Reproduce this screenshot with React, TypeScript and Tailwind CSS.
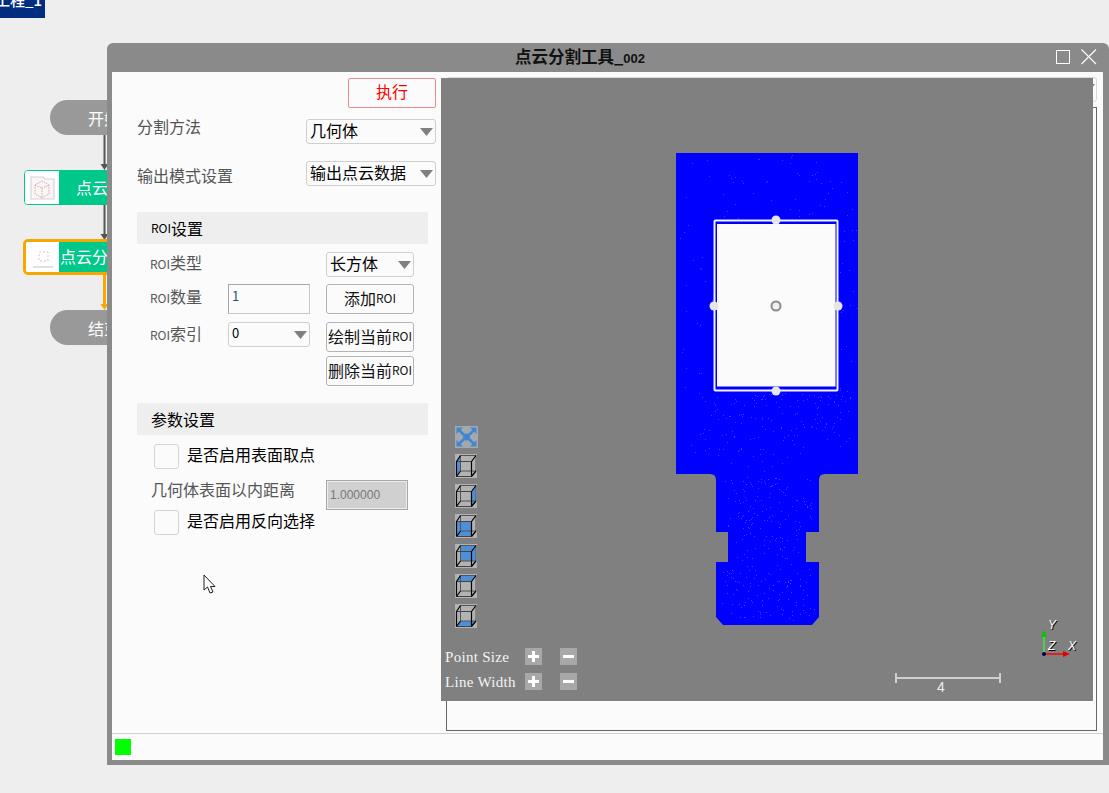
import React from "react";

const cjk = "font-['Noto_Sans_CJK_SC','Liberation_Sans',sans-serif]";

function Roi() {
  return <span className="text-[12px]">ROI</span>;
}

function Arrow() {
  return (
    <svg width="13" height="8" viewBox="0 0 13 8" className="shrink-0">
      <path d="M0 0H13L6.5 8Z" fill="#808080" />
    </svg>
  );
}

function Select({ value, className, small }: { value: string; className: string; small?: boolean }) {
  return (
    <div
      className={`flex items-center justify-between rounded-[3px] border border-[#cfcfcf] bg-[#fbfbfb] pl-[3px] pr-[2px] text-black ${
        small ? "text-[13px]" : "text-[16px]"
      } leading-none ${className}`}
    >
      <span className="mb-[4px]">{value}</span>
      <Arrow />
    </div>
  );
}

function Btn({ children, className = "" }: { children: React.ReactNode; className?: string }) {
  return (
    <div
      className={`flex h-[30px] w-[88px] items-center justify-center overflow-hidden whitespace-nowrap rounded-[3px] border border-[#b4b4b4] bg-[#fbfbfb] pb-[3px] text-[16px] leading-none text-[#111] ${className}`}
    >
      {children}
    </div>
  );
}

function SectionBar({ children, className = "" }: { children: React.ReactNode; className?: string }) {
  return (
    <div
      className={`ml-[25px] flex h-[32px] w-[291px] items-center rounded-[2px] bg-[#eeeeee] pl-[14px] text-[16px] leading-none text-black ${className}`}
    >
      {children}
    </div>
  );
}

function CheckRow({ label, className = "" }: { label: string; className?: string }) {
  return (
    <div className={`ml-[42px] flex items-center gap-[8px] text-[16px] leading-none text-black ${className}`}>
      <div className="h-[25px] w-[25px] rounded-[3px] border border-[#d4d4d4] bg-[#fbfbfb]" />
      <span className="mb-[5px]">{label}</span>
    </div>
  );
}

// draws the small orthographic view buttons, only the highlighted face differs
function Cube({ face }: { face: "left" | "right" | "front" | "back" | "top" | "bottom" }) {
  const faces = {
    left: "M1.5 7.5L5.5 1.5V17L1.5 22.5Z",
    right: "M16.5 7.5L21 1.5V17L16.5 22.5Z",
    front: "M1.5 7.5H16.5V22.5H1.5Z",
    back: "M5.5 1.5H21V17H5.5Z",
    top: "M1.5 7.5L5.5 1.5H21L16.5 7.5Z",
    bottom: "M1.5 22.5L5.5 17H21L16.5 22.5Z",
  };
  return (
    <svg width="22" height="24" viewBox="0 0 22 24" className="block bg-[#b2b2b2]">
      <path d={faces[face]} fill="#4f8fd6" />
      <path d="M5.5 1.5H21V17H5.5Z" fill="none" stroke="#555" strokeWidth="1" />
      <path d="M1.5 7.5H16.5V22.5H1.5Z" fill="none" stroke="#444" strokeWidth="1" />
      <path
        d="M1.5 7.5L5.5 1.5M16.5 7.5L21 1.5M1.5 22.5L5.5 17M16.5 22.5L21 17M1.5 7.5V22.5M16.5 7.5V22.5"
        fill="none"
        stroke="#000"
        strokeWidth="1.2"
      />
    </svg>
  );
}

function FitIcon() {
  return (
    <svg width="23" height="22" viewBox="0 0 23 22" className="block bg-[#a4a8ac]">
      <circle cx="11.5" cy="11" r="3.5" fill="#3f87d2" />
      <path d="M3 3L9 9M20 3L14 9M3 19L9 13M20 19L14 13" stroke="#3f87d2" strokeWidth="2.5" />
      <path d="M1.5 1.5H8L1.5 8ZM21.5 1.5H15L21.5 8ZM1.5 20.5H8L1.5 14ZM21.5 20.5H15L21.5 14Z" fill="#3f87d2" />
    </svg>
  );
}

function SizeBtn({ minus }: { minus?: boolean }) {
  return (
    <svg width="17" height="17" viewBox="0 0 17 17" className="block bg-[#a8a8a8]">
      <path d={minus ? "M3 8.5H14" : "M3 8.5H14M8.5 3V14"} stroke="#fff" strokeWidth="3" />
    </svg>
  );
}

function SizeRow({ label }: { label: string }) {
  return (
    <div className="flex h-[17px] items-center font-['Liberation_Serif',serif] text-[15px] leading-none tracking-[0.3px] text-[#f4f4f4]">
      <span className="mt-[2px] w-[80px] whitespace-nowrap">{label}</span>
      <SizeBtn />
      <span className="w-[18px]" />
      <SizeBtn minus />
    </div>
  );
}

function makeSpeckles() {
  let seed = 4711;
  const rnd = () => {
    seed = (seed * 16807) % 2147483647;
    return seed / 2147483647;
  };
  const pts: [number, number][] = [];
  const add = (n: number, x0: number, x1: number, y0: number, y1: number) => {
    for (let i = 0; i < n; i++) {
      pts.push([Math.round(x0 + rnd() * (x1 - x0)), Math.round(y0 + rnd() * (y1 - y0))]);
    }
  };
  add(50, 680, 855, 155, 218);
  add(20, 678, 712, 220, 400);
  add(20, 840, 857, 220, 400);
  add(130, 700, 850, 393, 440);
  add(30, 680, 855, 440, 472);
  add(110, 725, 812, 476, 530);
  add(40, 735, 800, 532, 560);
  add(110, 722, 815, 564, 620);
  return pts;
}
const speckles = makeSpeckles();

function PointCloud() {
  return (
    <svg viewBox="441 78 652 623" width="652" height="623" className="absolute inset-0 block">
      <path
        d="M676 153H858V474H825Q819 474 819 480V532H806V562H819V617L812 625H723L716 617V562H728V532H716V480Q716 474 710 474H676Z"
        fill="#0000ff"
      />
      {speckles.map(([x, y], i) => (
        <rect key={i} x={x} y={y} width="1" height="1" fill="#3a3aff" />
      ))}
      <rect x="714.5" y="220.5" width="123" height="170" rx="1" fill="none" stroke="#f4f4ff" strokeWidth="2" />
      <rect x="717" y="224" width="118.5" height="162.5" fill="#fbfbfb" />
      {[
        [776, 220],
        [776, 391],
        [714, 306],
        [838, 306],
      ].map(([cx, cy]) => (
        <circle key={`${cx}-${cy}`} cx={cx} cy={cy} r="4.5" fill="#e6e6e6" />
      ))}
      <circle cx="776" cy="306" r="4.5" fill="#f0f0f0" stroke="#8a8a8a" strokeWidth="2" />

      <path d="M1044 654V636" stroke="#4fcf4f" strokeWidth="2" />
      <path d="M1044 630L1041 637H1047Z" fill="#00c800" />
      <path d="M1044 654H1064" stroke="#ff0000" strokeWidth="1.5" />
      <path d="M1070 654L1063 651V657Z" fill="#e00000" />
      <circle cx="1044" cy="654" r="2" fill="#00004a" />
      <g fontFamily="'Liberation Sans', sans-serif" fontSize="12" fontStyle="italic">
        <text x="1048" y="629" fill="#000" dx="1" dy="1">Y</text>
        <text x="1048" y="629" fill="#fff">Y</text>
        <text x="1048" y="650" fill="#000" dx="1" dy="1">Z</text>
        <text x="1048" y="650" fill="#fff">Z</text>
        <text x="1068" y="650" fill="#000" dx="1" dy="1">X</text>
        <text x="1068" y="650" fill="#fff">X</text>
      </g>

      <path d="M896 678H1000" stroke="#cfcfcf" strokeWidth="2" />
      <path d="M896 673V683M1000 673V683" stroke="#cfcfcf" strokeWidth="2" />
      <text x="937" y="692" fontFamily="'Liberation Sans', sans-serif" fontSize="14" fill="#eeeeee">4</text>
    </svg>
  );
}

function Viewport() {
  return (
    <div className="absolute left-0 top-[6px] h-[623px] w-[652px] overflow-hidden bg-[#808080]">
      <PointCloud />
      <div className="absolute left-[14px] top-[348px] flex flex-col gap-[6px]">
        <FitIcon />
        <Cube face="left" />
        <Cube face="right" />
        <Cube face="front" />
        <Cube face="back" />
        <Cube face="top" />
        <Cube face="bottom" />
      </div>
      <div className="absolute left-[4px] top-[570px] flex flex-col gap-[8px]">
        <SizeRow label="Point Size" />
        <SizeRow label="Line Width" />
      </div>
    </div>
  );
}

function LeftPanel() {
  return (
    <div className="w-[329px] shrink-0 text-[#555]">
      <div className="flex justify-end pr-[5px] pt-[6px]">
        <div className="flex h-[30px] w-[88px] items-center justify-center rounded-[2px] border border-[#f08a8a] pb-[4px] text-[16px] leading-none text-[#ff0000]">
          执行
        </div>
      </div>
      <div className="mt-[11px] flex items-start justify-between pl-[25px] pr-[5px]">
        <span className="-mt-[2px] text-[16px] leading-[18px]">分割方法</span>
        <Select value="几何体" className="h-[25px] w-[130px]" />
      </div>
      <div className="mt-[17px] flex items-start justify-between pl-[25px] pr-[5px]">
        <span className="mt-[5px] text-[16px] leading-[18px]">输出模式设置</span>
        <Select value="输出点云数据" className="h-[25px] w-[130px]" />
      </div>
      <SectionBar className="mt-[26px]">
        <Roi />
        设置
      </SectionBar>

      <div className="ml-[38px] mt-[8px] flex w-[264px] items-start justify-between">
        <span className="mt-[1px] text-[16px] leading-[18px]">
          <Roi />
          类型
        </span>
        <Select value="长方体" className="h-[25px] w-[88px]" />
      </div>
      <div className="ml-[38px] mt-[7px] flex w-[264px] items-start">
        <span className="mt-[3px] w-[78px] text-[16px] leading-[18px]">
          <Roi />
          数量
        </span>
        <div className="h-[30px] w-[82px] border border-[#a8a8a8] border-r-[#c8c8c8] border-b-[#c8c8c8] pl-[3px] pt-[2px] text-[13px] leading-[18px] text-[#23527c]">
          1
        </div>
        <Btn className="ml-auto">
          添加
          <Roi />
        </Btn>
      </div>
      <div className="ml-[38px] mt-[8px] flex w-[264px] items-start">
        <span className="mt-[2px] w-[78px] text-[16px] leading-[18px]">
          <Roi />
          索引
        </span>
        <Select value="0" small className="h-[25px] w-[82px]" />
        <Btn className="ml-auto">
          绘制当前
          <Roi />
        </Btn>
      </div>
      <div className="ml-[38px] mt-[4px] flex w-[264px] justify-end">
        <Btn>
          删除当前
          <Roi />
        </Btn>
      </div>

      <SectionBar className="mt-[17px]">参数设置</SectionBar>
      <CheckRow label="是否启用表面取点" className="mt-[9px]" />
      <div className="ml-[39px] mt-[11px] flex w-[257px] items-start justify-between">
        <span className="-mt-[1px] text-[16px] leading-[20px]">几何体表面以内距离</span>
        <div className="flex h-[30px] w-[82px] items-center border border-[#a8a8a8] bg-[#d0d0d0] pl-[3px] font-['Liberation_Sans',sans-serif] text-[12px] leading-none text-[#777] shadow-[inset_0_0_0_1px_#ececec]">
          1.000000
        </div>
      </div>
      <CheckRow label="是否启用反向选择" />
      <svg width="16" height="22" viewBox="0 0 16 22" className="ml-[91px] mt-[39px] block">
        <path d="M1 1V16L4.5 13L7 19L10 18L7.5 12.5H12Z" fill="#fff" stroke="#222" strokeWidth="1" />
      </svg>
    </div>
  );
}

function ToolWindow() {
  return (
    <div className="absolute left-[107px] top-[43px] flex h-[722px] w-[1002px] flex-col rounded-t-[6px] bg-[#8a8a8a] px-[5px] pb-[5px] pr-[6px]">
      <div className="-mx-[5px] -mr-[6px] flex h-[29px] shrink-0 items-center">
        <div className="mb-[3px] flex-1 text-center text-[16.5px] font-bold leading-none text-[#111]">
          点云分割工具_<span className="font-['Liberation_Sans',sans-serif] text-[13px]">002</span>
        </div>
        <svg width="56" height="29" viewBox="0 0 56 29" className="shrink-0">
          <rect x="3.5" y="7.5" width="13" height="13" fill="none" stroke="#fff" strokeWidth="1" />
          <path d="M28.5 6.5L43 21M43 6.5L28.5 21" stroke="#fff" strokeWidth="1.1" fill="none" />
        </svg>
      </div>
      <div className="flex min-h-0 flex-1 flex-col bg-[#fbfbfb]">
        <div className="flex min-h-0 flex-1">
          <LeftPanel />
          <div className="relative flex-1 pl-[5px] pr-[6px] pt-[5px]">
            <div className="flex h-[25px] items-start justify-end rounded-[3px] border border-[#d8d8d8] pr-[1px] pt-[6px]">
              <svg width="6" height="4" viewBox="0 0 6 4" className="block">
                <path d="M0 0H6L3 4Z" fill="#808080" />
              </svg>
            </div>
            <div className="mt-[5px] h-[624px] border border-[#666]" />
            <Viewport />
          </div>
        </div>
        <div className="flex h-[27px] shrink-0 items-center border-t border-[#cfcfcf] pl-[3px]">
          <div className="h-[16px] w-[16px] bg-[#00ff00]" />
        </div>
      </div>
    </div>
  );
}

function Pill({ top, label }: { top: string; label: string }) {
  return (
    <div className={`absolute left-[50px] flex h-[35px] w-[100px] items-center rounded-full bg-[#999999] pl-[38px] text-[16px] leading-none text-white ${top}`}>
      {label}
    </div>
  );
}

function NodeIcon() {
  return (
    <svg width="25" height="26" viewBox="0 0 25 26">
      <path d="M1 2H13L15 4H24V24H1Z" fill="#f7f7f7" stroke="#d4d4d4" strokeWidth="1.2" />
      <path d="M5 10L12 6L19 10L12 13ZM5 10V19L12 23L19 19V10M12 13V23" stroke="#f0a0a0" strokeWidth="1" strokeDasharray="1.5 1" fill="none" />
    </svg>
  );
}

function FlowCanvas() {
  return (
    <>
      <div className="absolute left-0 top-0 h-[18px] w-[45px] overflow-hidden bg-[#002d7f]">
        <span className="absolute left-[-5px] top-[-10px] whitespace-nowrap text-[15px] font-medium leading-[20px] text-white">工程_1</span>
      </div>
      <Pill top="top-[100px]" label="开始" />
      <Pill top="top-[310px]" label="结束" />
      <svg width="12" height="240" viewBox="0 0 12 240" className="absolute left-[98px] top-[135px]">
        <path d="M6.5 0V30M6.5 70V100" stroke="#555" strokeWidth="2" />
        <path d="M2.5 29H10.5L6.5 35ZM2.5 99H10.5L6.5 105Z" fill="#555" />
        <path d="M6.5 140V170" stroke="#f5a800" strokeWidth="3" />
        <path d="M2.5 169H10.5L6.5 175Z" fill="#f5a800" />
      </svg>
      <div className="absolute left-[24px] top-[170px] flex h-[35px] w-[130px] overflow-hidden rounded-[4px] border border-[#00c78a]">
        <div className="flex w-[34px] items-center justify-center bg-white">
          <NodeIcon />
        </div>
        <div className="flex-1 bg-[#00c78a] pl-[17px] text-[16px] leading-[33px] text-white">点云</div>
      </div>
      <div className="absolute left-[23px] top-[239px] flex h-[36px] w-[130px] overflow-hidden rounded-[5px] border-[3px] border-[#f5a800]">
        <div className="flex w-[33px] items-center justify-center bg-white">
          <svg width="24" height="24" viewBox="0 0 24 24">
            <path d="M8 7H17V16H8Z" fill="none" stroke="#f2b8b8" strokeDasharray="2 2" />
            <path d="M2 22H22" stroke="#e0e0e0" strokeWidth="2" />
          </svg>
        </div>
        <div className="flex-1 bg-[#00c78a] pl-[1px] text-[16px] leading-[28px] text-white">点云分割</div>
      </div>
    </>
  );
}

export default function App() {
  return (
    <div className={`relative h-[793px] w-[1109px] overflow-hidden bg-[#eeeeee] ${cjk}`}>
      <FlowCanvas />
      <ToolWindow />
    </div>
  );
}
